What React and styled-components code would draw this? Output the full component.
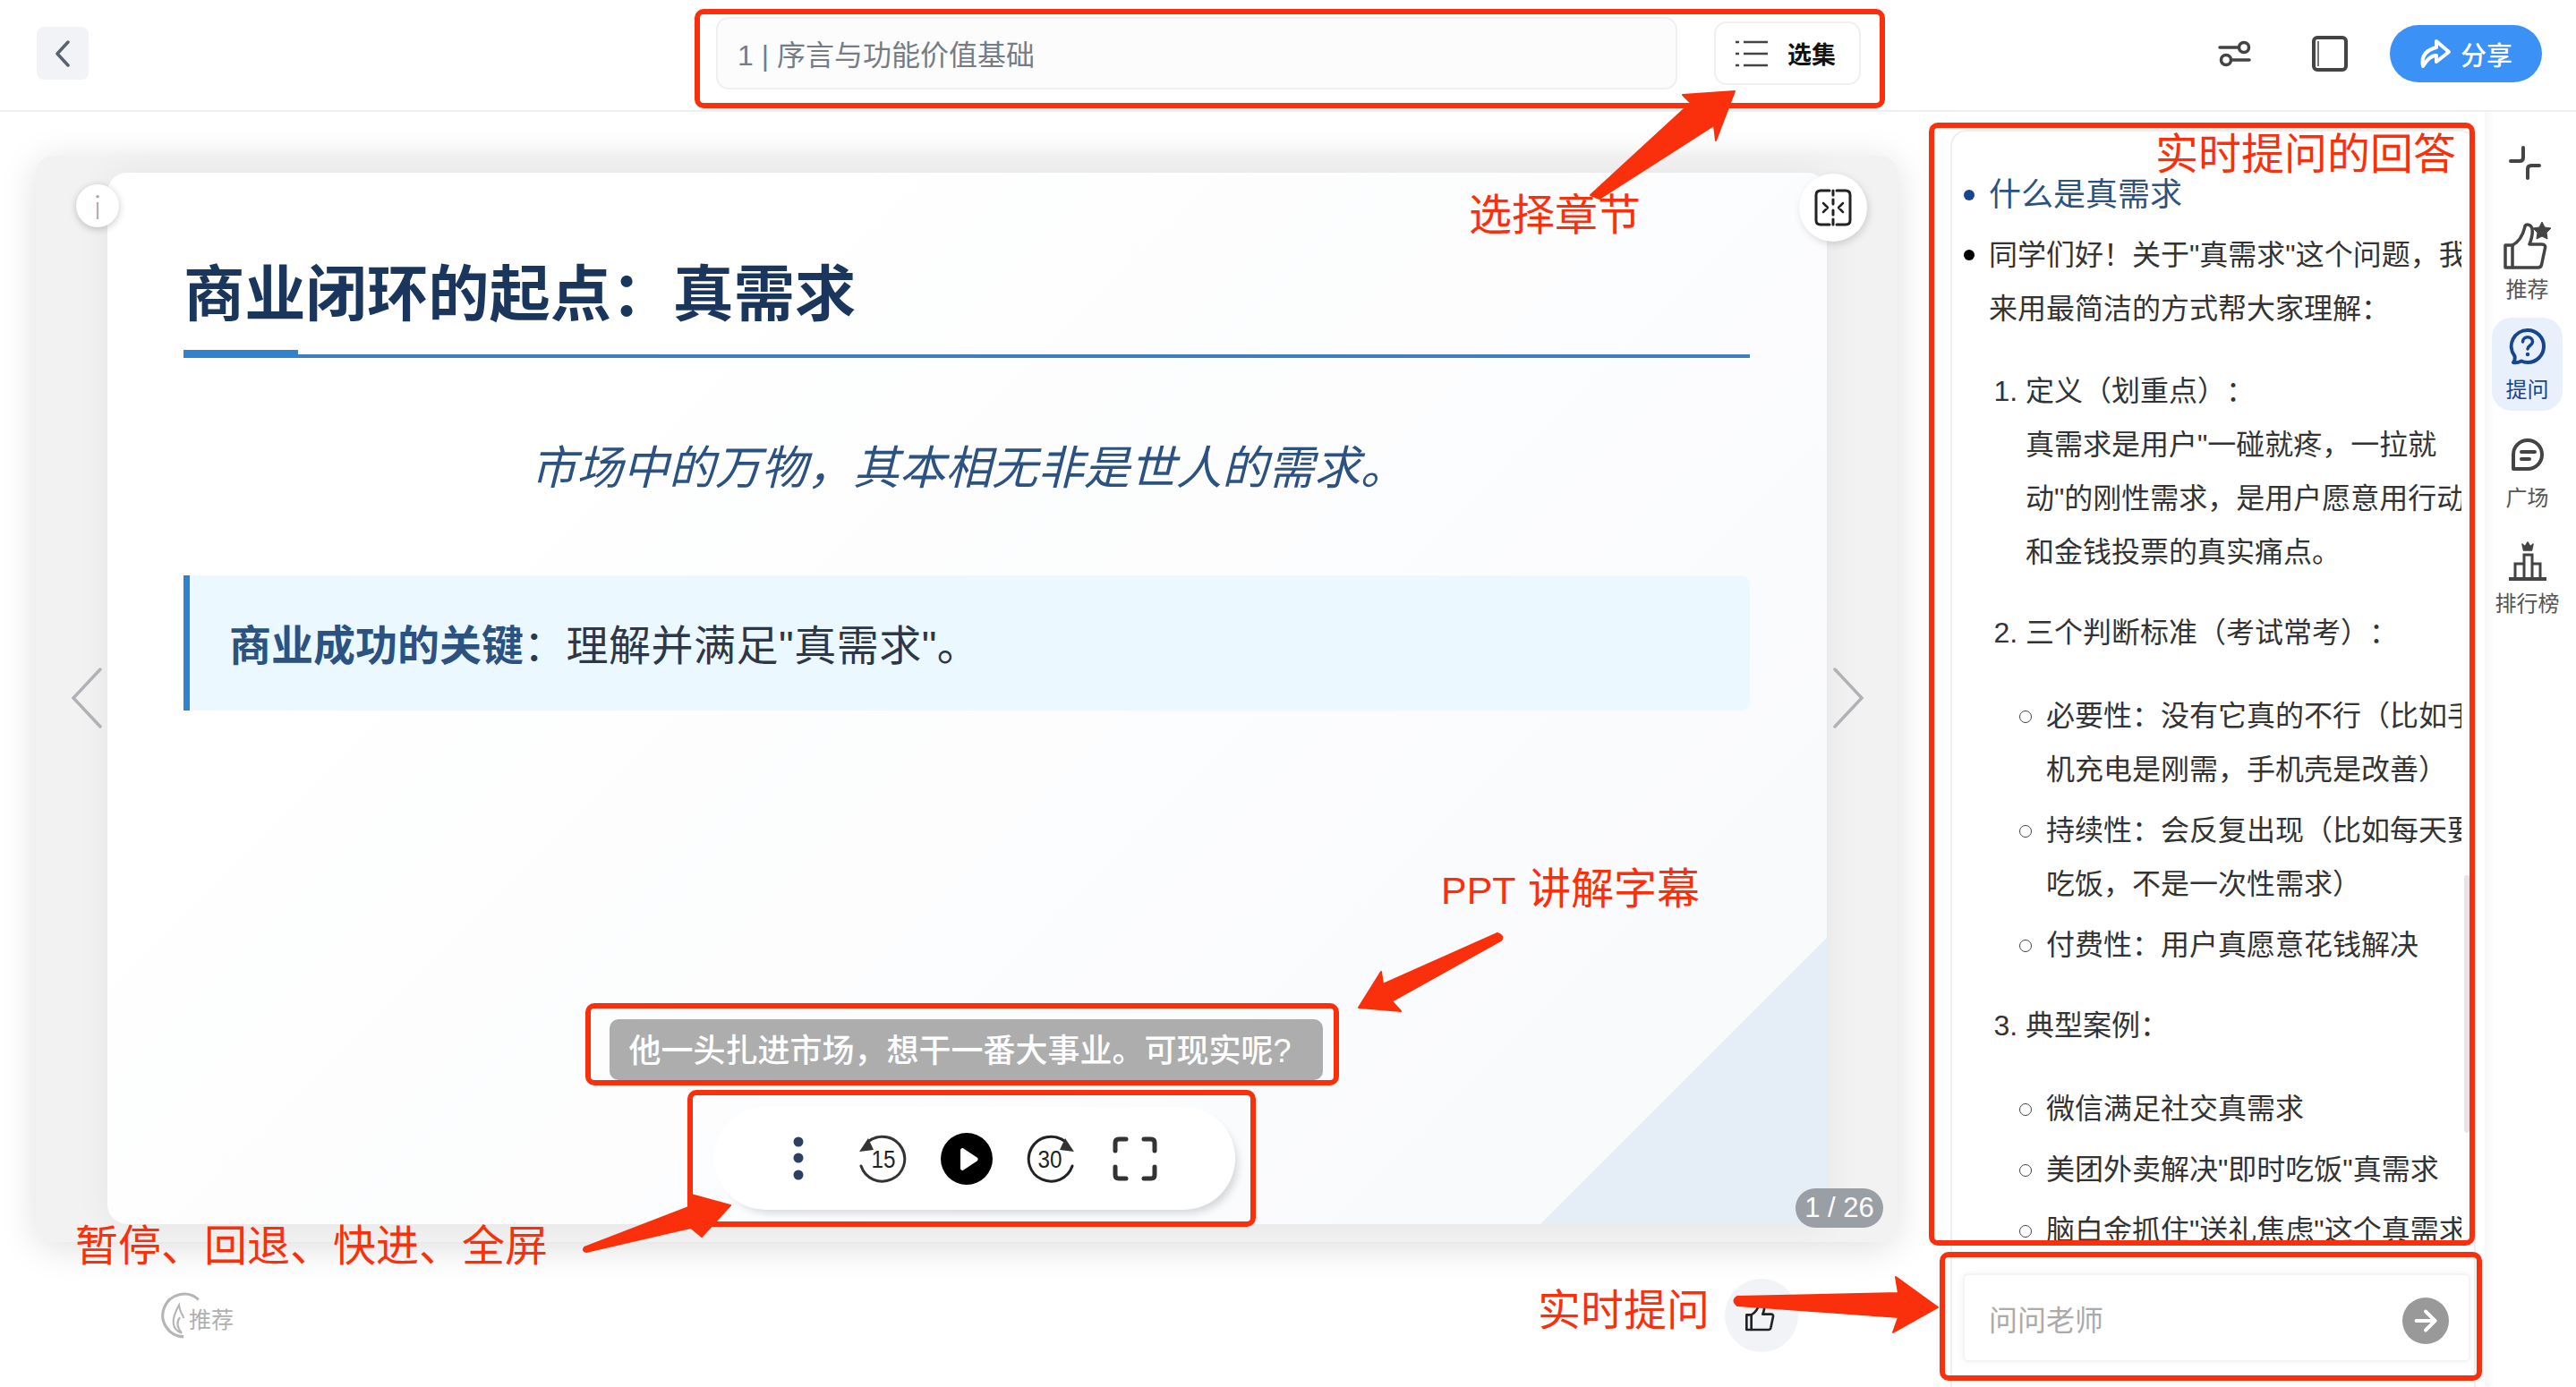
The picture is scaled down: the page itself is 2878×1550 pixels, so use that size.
import styled, { createGlobalStyle } from "styled-components";
import { ArrowRight } from "lucide-react";

const RED = "#f9300b";

const GlobalStyle = createGlobalStyle`
  html, body {
    margin: 0;
    height: 100%;
    overflow: hidden;
    background: #fff;
    font-family: "Liberation Sans", "Noto Sans CJK SC", sans-serif;
    text-spacing-trim: space-all;
  }
  * { box-sizing: border-box; }
`;

export default function App() {
  return (
    <Page>
      <GlobalStyle />
      <Header>
        <BackCell>
          <BackButton>
            <svg width="18" height="30" viewBox="0 0 18 30" fill="none" stroke="#59636f" strokeWidth="3.5" strokeLinecap="round" strokeLinejoin="round">
              <path d="M15 2 3 15l12 13" />
            </svg>
          </BackButton>
        </BackCell>
        <ChapterCell>
          <ChapterField>1 | 序言与功能价值基础</ChapterField>
          <EpisodeButton>
            <svg width="36" height="32" viewBox="0 0 36 32" fill="none" stroke="#444" strokeWidth="2.5">
              <path d="M0 3h4M9 3h27M0 16h4M9 16h27M0 29h4M9 29h27" />
            </svg>
            选集
          </EpisodeButton>
        </ChapterCell>
        <ActionsCell>
          <svg width="38" height="32" viewBox="0 0 38 32" fill="none" stroke="#444" strokeWidth="3.5" strokeLinecap="round">
            <path d="M2 9h20M15 23h20" />
            <circle cx="29" cy="9" r="5.5" />
            <circle cx="9" cy="23" r="5.5" />
          </svg>
          <PanelIcon width="42" height="42" viewBox="0 0 42 42" fill="none">
            <rect x="3" y="3" width="36" height="36" rx="4" stroke="#444" strokeWidth="4" />
            <path d="M8 7v28" stroke="#777" strokeWidth="2" />
          </PanelIcon>
          <ShareButton>
            <svg width="36" height="34" viewBox="0 0 36 34" fill="none" stroke="#fff" strokeWidth="4" strokeLinejoin="round" strokeLinecap="round">
              <path d="M19 3 33 15 19 26v-7c-6 0-10 4-15 12-2-11 3-18 15-21z" />
            </svg>
            分享
          </ShareButton>
        </ActionsCell>
      </Header>

      <Main>
        <LeftSection>
          <SlideFrame>
            <Slide>
              <SlideTitle>商业闭环的起点：真需求</SlideTitle>
              <Quote>市场中的万物，其本相无非是世人的需求。</Quote>
              <Callout>
                <strong>商业成功的关键</strong>：理解并满足"真需求"。
              </Callout>
              <CornerShape />
              <Subtitle>他一头扎进市场，想干一番大事业。可现实呢?</Subtitle>
              <Controls>
                <ControlSlot>
                  <svg width="12" height="50" viewBox="0 0 12 50" fill="#2d4060">
                    <circle cx="6" cy="6" r="5.5" />
                    <circle cx="6" cy="24" r="5.5" />
                    <circle cx="6" cy="43" r="5.5" />
                  </svg>
                </ControlSlot>
                <ControlSlot>
                  <svg width="56" height="56" viewBox="0 0 56 56" fill="none">
                    <path d="M13 8A25 25 0 1 1 4 36" stroke="#333" strokeWidth="3" strokeLinecap="round" />
                    <path d="M2 20 12 5l6 13z" fill="#333" />
                    <SkipText x="29" y="38" textLength="27" lengthAdjust="spacingAndGlyphs">15</SkipText>
                  </svg>
                </ControlSlot>
                <ControlSlot>
                  <svg width="58" height="58" viewBox="0 0 58 58">
                    <circle cx="29" cy="29" r="29" fill="#000" />
                    <path d="M22 19.5c0-2 2-3 3.500-2l15 10c1.500 1 1.500 3 0 4l-15 10c-1.500 1-3.500 0-3.500-2z" fill="#fff" />
                  </svg>
                </ControlSlot>
                <ControlSlot>
                  <svg width="56" height="56" viewBox="0 0 56 56" fill="none">
                    <path d="M43 8A25 25 0 1 0 52 36" stroke="#222" strokeWidth="3" strokeLinecap="round" />
                    <path d="M54 20 44 5l-6 13z" fill="#333" />
                    <SkipText x="27" y="38" textLength="27" lengthAdjust="spacingAndGlyphs">30</SkipText>
                  </svg>
                </ControlSlot>
                <ControlSlot>
                  <svg width="50" height="50" viewBox="0 0 50 50" fill="none" stroke="#333" strokeWidth="5" strokeLinecap="round" strokeLinejoin="round">
                    <path d="M3 16V7q0-4 4-4h8M35 3h8q4 0 4 4v9M47 34v9q0 4-4 4h-8M15 47H7q-4 0-4-4v-9" />
                  </svg>
                </ControlSlot>
              </Controls>
            </Slide>

            <InfoButton>i</InfoButton>
            <SplitButton>
              <svg width="42" height="42" viewBox="0 0 42 42" fill="none" stroke="#222" strokeWidth="3" strokeLinecap="round" strokeLinejoin="round">
                <path d="M17 2H7Q2 2 2 7v28q0 5 5 5h10M25 2h10q5 0 5 5v28q0 5-5 5H25" />
                <path d="M21 2v5M21 12v5M21 24v5M21 34v6" />
                <path d="m10 16 5 5-5 5M32 16l-5 5 5 5" strokeWidth="2.500" />
              </svg>
            </SplitButton>
            <SlideNav $side="left">
              <svg width="36" height="68" viewBox="0 0 36 68" fill="none" stroke="#b0b2b6" strokeWidth="3.500" strokeLinecap="round">
                <path d="M33 2 3 34l30 32" />
              </svg>
            </SlideNav>
            <SlideNav $side="right">
              <svg width="36" height="68" viewBox="0 0 36 68" fill="none" stroke="#b0b2b6" strokeWidth="3.500" strokeLinecap="round">
                <path d="m3 2 30 32L3 66" />
              </svg>
            </SlideNav>
            <PageBadge>1 / 26</PageBadge>
          </SlideFrame>

          <FooterRow>
            <BrandMark>
              <svg width="52" height="52" viewBox="0 0 50 50" fill="none" stroke="#b5b5b5" strokeWidth="3">
                <path d="M46 8A23 23 0 1 0 30 48" />
                <path d="M28 44C17 40 16 30 25 14c1 9 4 9 5 14M28 44c-5-6-6-12-2-17" strokeWidth="2" />
              </svg>
              <span>推荐</span>
            </BrandMark>
            <LikeButton>
              <ThumbOutline size={36} stroke="#222" />
            </LikeButton>
          </FooterRow>
        </LeftSection>

        <AnswerColumn>
          <AnswerScroll>
            <TopList>
              <TopItem $heading>什么是真需求</TopItem>
              <TopItem>
                同学们好！关于"真需求"这个问题，我
                <br />
                来用最简洁的方式帮大家理解：
              </TopItem>
            </TopList>
            <NumberList>
              <NumberItem>
                定义（划重点）：
                <br />
                真需求是用户"一碰就疼，一拉就
                <br />
                动"的刚性需求，是用户愿意用行动
                <br />
                和金钱投票的真实痛点。
              </NumberItem>
              <NumberItem>
                三个判断标准（考试常考）：
                <SubList>
                  <SubItem>
                    必要性：没有它真的不行（比如手
                    <br />
                    机充电是刚需，手机壳是改善）
                  </SubItem>
                  <SubItem>
                    持续性：会反复出现（比如每天要
                    <br />
                    吃饭，不是一次性需求）
                  </SubItem>
                  <SubItem>付费性：用户真愿意花钱解决</SubItem>
                </SubList>
              </NumberItem>
              <NumberItem>
                典型案例：
                <SubList>
                  <SubItem>微信满足社交真需求</SubItem>
                  <SubItem>美团外卖解决"即时吃饭"真需求</SubItem>
                  <SubItem>脑白金抓住"送礼焦虑"这个真需求</SubItem>
                </SubList>
              </NumberItem>
            </NumberList>
          </AnswerScroll>
          <ScrollThumb />
          <AskBox>
            <AskHint>问问老师</AskHint>
            <SendButton>
              <ArrowRight size={36} color="#fff" strokeWidth={2.6} />
            </SendButton>
          </AskBox>
        </AnswerColumn>

        <SideRail>
          <CollapseIcon width="36" height="38" viewBox="0 0 36 38" fill="none" stroke="#444" strokeWidth="4" strokeLinecap="round">
            <path d="M2 17h10q4 0 4-4V2M34 22H25q-4 0-4 4v10" />
          </CollapseIcon>
          <RailItem $top={42}>
            <IconSlot>
              <ThumbOutline size={54} stroke="#444" star />
            </IconSlot>
            推荐
          </RailItem>
          <RailItem $top={8} $active>
            <IconSlot>
              <svg width="42" height="42" viewBox="0 0 42 42" fill="none" stroke="#17468f" strokeWidth="4" strokeLinecap="round" strokeLinejoin="round">
                <path d="M21 3a18 18 0 0 1 0 36c-3 0-5-.500-7-1.500C11 39 7 39.500 5 39c2-2 2-4 1.500-7A18 18 0 0 1 21 3z" />
                <path d="M15.500 16c0-7 11-7 11 0 0 4-5.500 4-5.500 8" strokeWidth="3.500" />
                <circle cx="21" cy="30" r="1" strokeWidth="2.500" />
              </svg>
            </IconSlot>
            提问
          </RailItem>
          <RailItem $top={17}>
            <IconSlot>
              <svg width="38" height="38" viewBox="0 0 38 38" fill="none" stroke="#444" strokeWidth="4" strokeLinecap="round" strokeLinejoin="round">
                <path d="M3 35V19a16 16 0 1 1 16 16z" />
                <path d="M12 16h15M12 24h9" />
              </svg>
            </IconSlot>
            广场
          </RailItem>
          <RailItem $top={14}>
            <IconSlot>
              <svg width="44" height="46" viewBox="0 0 44 46" fill="none" stroke="#444" strokeWidth="3">
                <path d="M1 44h42" strokeWidth="4" />
                <path d="M8 44V27h10M18 44V17h9v27M27 27h9v17" />
                <path d="m16 5 3 3 3-5 3 5 3-3-1.500 7h-9z" fill="#444" strokeWidth="1.500" strokeLinejoin="round" />
              </svg>
            </IconSlot>
            排行榜
          </RailItem>
        </SideRail>
      </Main>

      <Annotations>
        <RedFrame $x={776} $y={10} $w={1330} $h={111} />
        <RedFrame $x={2155} $y={137} $w={610} $h={1255} />
        <RedFrame $x={654} $y={1121} $w={842} $h={92} />
        <RedFrame $x={768} $y={1218} $w={635} $h={153} />
        <RedFrame $x={2167} $y={1399} $w={606} $h={144} />
        <NoteLabel $x={2408} $y={143}>实时提问的回答</NoteLabel>
        <NoteLabel $x={1641} $y={211}>选择章节</NoteLabel>
        <NoteLabel $x={1610} $y={964}><NoteLatin>PPT</NoteLatin> 讲解字幕</NoteLabel>
        <NoteLabel $x={84} $y={1363}>暂停、回退、快进、全屏</NoteLabel>
        <NoteLabel $x={1718} $y={1435}>实时提问</NoteLabel>
        <ArrowLayer width="2878" height="1550" viewBox="0 0 2878 1550" fill={RED} stroke={RED} strokeWidth="2" strokeLinejoin="round">
          <path d="M1777 218 1889 115 1880 106 1938 102 1917 157 1915 140 1787 222z" />
          <path d="M1673 1043 1545 1100 1543 1086 1518 1126 1565 1130 1555 1119 1677 1051Q1681 1046 1673 1043z" />
          <path d="M653 1394 772 1348 772 1335 816 1347 784 1382 772 1372 655 1399Q650 1398 653 1394z" />
          <path d="M1941 1449 2121 1445 2118 1427 2165 1461 2115 1489 2121 1472 1941 1459Q1934 1453 1941 1449z" />
        </ArrowLayer>
      </Annotations>
    </Page>
  );
}

function ThumbOutline({ size, stroke, star }) {
  return (
    <svg width={size} height={size} viewBox="0 0 54 54" fill="none" stroke={stroke} strokeWidth={star ? 3.5 : 4} strokeLinejoin="round" style={{ overflow: "visible" }}>
      <path d="M2 26h8v25H2z" />
      <path d="M10 26c8-4 12-12 14-21 0-3 7-3 8 3 1 6-1 12-3 17h14c3 0 4 2 3.500 4l-4 19c-.500 2-2 3-4 3H10" />
      {star && (
        <path d="M43 0l3 6 7 1-5 5 1 7-6-3-6 3 1-7-5-5 7-1z" fill={stroke} strokeWidth="1" />
      )}
    </svg>
  );
}

const Page = styled.div`
  position: relative;
  width: 2878px;
  height: 1550px;
  overflow: hidden;
  background: #fff;
  color: #333;
`;

const Header = styled.header`
  display: grid;
  grid-template-columns: 800px 1279px 1fr;
  height: 125px;
  border-bottom: 2px solid #eee;
`;

const BackCell = styled.div`
  padding: 30px 0 0 41px;
`;

const BackButton = styled.button`
  display: flex;
  align-items: center;
  justify-content: center;
  width: 58px;
  height: 59px;
  border: 0;
  padding: 0;
  border-radius: 8px;
  background: #f1f3f6;
`;

const ChapterCell = styled.div`
  display: flex;
  align-items: flex-start;
  padding-top: 19px;
`;

const ChapterField = styled.div`
  display: flex;
  align-items: center;
  width: 1074px;
  height: 81px;
  padding: 0 0 2px 22px;
  border: 2px solid #f0f0f0;
  border-radius: 14px;
  background: #fcfcfc;
  color: #777c84;
  font-size: 32px;
`;

const EpisodeButton = styled.button`
  display: flex;
  align-items: center;
  gap: 22px;
  width: 164px;
  height: 71px;
  margin: 5px 0 0 41px;
  padding: 0 0 0 22px;
  border: 2px solid #f0f0f0;
  border-radius: 14px;
  background: #fff;
  color: #111;
  font-family: inherit;
  font-size: 27px;
  font-weight: 700;
`;

const ActionsCell = styled.div`
  display: flex;
  align-items: center;
  padding: 0 38px 0 399px;
  height: 120px;
`;

const PanelIcon = styled.svg`
  margin-left: 66px;
`;

const ShareButton = styled.button`
  display: flex;
  align-items: center;
  gap: 10px;
  width: 170px;
  height: 64px;
  margin-left: 46px;
  padding: 0 0 0 33px;
  border: 0;
  border-radius: 32px;
  background: #3b91f5;
  color: #fff;
  font-family: inherit;
  font-size: 29px;
  font-weight: 500;
`;

const Main = styled.main`
  display: flex;
  height: 1425px;
`;

const LeftSection = styled.section`
  width: 2179px;
  flex: none;
  padding: 49px 0 0 40px;
`;

const SlideFrame = styled.div`
  position: relative;
  width: 2080px;
  height: 1214px;
  padding: 19px 79px 20px 80px;
  border-radius: 20px;
  background: #f2f2f2;
  box-shadow: 0 6px 40px rgba(0, 0, 0, 0.13);
`;

const Slide = styled.div`
  position: relative;
  height: 100%;
  padding: 101px 86px 0 85px;
  border-radius: 22px;
  background: linear-gradient(135deg, #fff 20%, #f9fafc 90%);
  box-shadow: 0 0 40px rgba(0, 0, 0, 0.06);
`;

const SlideTitle = styled.h1`
  position: relative;
  margin: 0;
  padding-bottom: 32px;
  border-bottom: 4px solid #3f7dbd;
  color: #1a365d;
  font-size: 68.3px;
  font-weight: 700;
  line-height: 70px;

  &::after {
    content: "";
    position: absolute;
    left: 0;
    bottom: -4px;
    width: 128px;
    height: 9px;
    background: #3182ce;
  }
`;

const Quote = styled.p`
  margin: 93px 0 0;
  padding-left: 4px;
  color: #2c5282;
  font-size: 51.5px;
  font-style: italic;
  line-height: 60px;
  text-align: center;
`;

const Callout = styled.div`
  display: flex;
  align-items: center;
  height: 151px;
  margin-top: 90px;
  padding: 0 0 3px 44px;
  border-left: 7px solid #3182ce;
  border-radius: 0 10px 10px 0;
  background: #ebf8ff;
  color: #2d3748;
  font-size: 47px;
  letter-spacing: 0.5px;

  strong {
    color: #2c5282;
    font-weight: 700;
    letter-spacing: 0;
  }
`;

const CornerShape = styled.div`
  position: absolute;
  right: 0;
  bottom: 0;
  width: 320px;
  height: 320px;
  background: #e5edf6;
  clip-path: polygon(100% 0, 100% 100%, 0 100%);
`;

const Subtitle = styled.div`
  position: absolute;
  left: 561px;
  top: 946px;
  display: flex;
  align-items: center;
  justify-content: center;
  width: 797px;
  height: 68px;
  padding: 0 14px 5px 0;
  border-radius: 10px;
  background: #adadad;
  color: #fff;
  font-size: 36px;
  font-weight: 500;
`;

const Controls = styled.div`
  position: absolute;
  left: 678px;
  top: 1044px;
  display: flex;
  align-items: center;
  width: 582px;
  height: 115px;
  padding-left: 47px;
  border-radius: 58px;
  background: #fff;
  box-shadow: 6px 7px 9px -3px rgba(0, 0, 0, 0.14);
`;

const ControlSlot = styled.div`
  display: flex;
  align-items: center;
  justify-content: center;
  width: 94px;
`;

const SkipText = styled.text`
  fill: #222;
  font-family: "Liberation Sans", sans-serif;
  font-size: 27px;
  text-anchor: middle;
`;

const InfoButton = styled.div`
  position: absolute;
  left: 45px;
  top: 32px;
  display: flex;
  align-items: center;
  justify-content: center;
  width: 48px;
  height: 48px;
  border-radius: 50%;
  background: #fff;
  box-shadow: 0 2px 8px rgba(0, 0, 0, 0.22);
  color: #a5a5a5;
  font-family: Lato, sans-serif;
  font-size: 38px;
  font-weight: 300;
`;

const SplitButton = styled.div`
  position: absolute;
  right: 34px;
  top: 20px;
  display: flex;
  align-items: center;
  justify-content: center;
  width: 76px;
  height: 76px;
  border-radius: 50%;
  background: #fff;
  box-shadow: 2px 3px 8px rgba(0, 0, 0, 0.14);
`;

const SlideNav = styled.div`
  position: absolute;
  top: 572px;
  ${(props) => (props.$side === "left" ? "left: 39px;" : "right: 37px;")}
`;

const PageBadge = styled.div`
  position: absolute;
  left: 1966px;
  top: 1154px;
  display: flex;
  align-items: center;
  justify-content: center;
  width: 98px;
  height: 44px;
  border-radius: 22px;
  background: #9a9fa6;
  color: #fff;
  font-size: 31px;
`;

const FooterRow = styled.div`
  display: flex;
  align-items: center;
  justify-content: space-between;
  height: 163px;
  padding: 0 170px 0 134px;
`;

const BrandMark = styled.div`
  display: flex;
  align-items: center;
  color: #b0b0b0;
  font-size: 25px;

  span {
    margin: 6px 0 0 -15px;
  }
`;

const LikeButton = styled.div`
  display: flex;
  align-items: center;
  justify-content: center;
  width: 82px;
  height: 82px;
  border-radius: 50%;
  background: #f1f3f7;
`;

const AnswerColumn = styled.section`
  position: relative;
  width: 587px;
  height: 1405px;
  flex: none;
  margin-top: 20px;
  border: 2px solid #eee;
  border-bottom: 0;
  border-radius: 18px 18px 0 0;
`;

const AnswerScroll = styled.div`
  width: 569px;
  height: 1243px;
  padding-top: 41px;
  overflow: hidden;
  font-size: 32px;
  line-height: 60px;
  white-space: nowrap;
`;

const TopList = styled.ul`
  margin: 0;
  padding-left: 41px;
  list-style: none;
`;

const TopItem = styled.li`
  position: relative;
  color: ${(props) => (props.$heading ? "#2c5282" : "#333")};
  font-size: ${(props) => (props.$heading ? "36px" : "32px")};

  &::before {
    content: "";
    position: absolute;
    left: -28px;
    top: 24px;
    width: 12px;
    height: 12px;
    border-radius: 50%;
    background: ${(props) => (props.$heading ? "#17468f" : "#000")};
  }

  & + & {
    margin-top: 7px;
  }
`;

const NumberList = styled.ol`
  margin: 32px 0 0;
  padding-left: 82px;
`;

const NumberItem = styled.li`
  & + & {
    margin-top: 30px;
  }
`;

const SubList = styled.ul`
  margin: 33px 0 0;
  padding-left: 23px;
  list-style: none;
`;

const SubItem = styled.li`
  position: relative;

  &::before {
    content: "";
    position: absolute;
    left: -30px;
    top: 24px;
    width: 12px;
    height: 12px;
    border: 1.5px solid #444;
    border-radius: 50%;
  }

  & + & {
    margin-top: 8px;
  }
`;

const ScrollThumb = styled.div`
  position: absolute;
  right: 5px;
  top: 831px;
  width: 6px;
  height: 288px;
  border-radius: 3px;
  background: #e5e5e5;
`;

const AskBox = styled.div`
  display: flex;
  align-items: center;
  justify-content: space-between;
  width: 567px;
  height: 99px;
  margin: 33px 0 0 12px;
  padding: 0 22px 0 27px;
  border: 2px solid #f2f4f4;
  border-radius: 6px;
  background: #fff;
  box-shadow: 0 0 10px rgba(0, 0, 0, 0.05);
`;

const AskHint = styled.span`
  color: #aaa;
  font-size: 32px;
`;

const SendButton = styled.div`
  display: flex;
  align-items: center;
  justify-content: center;
  width: 52px;
  height: 52px;
  margin-top: 6px;
  border-radius: 50%;
  background: #999;
`;

const SideRail = styled.aside`
  display: flex;
  flex-direction: column;
  align-items: center;
  width: 95px;
  margin-left: 10px;
  padding-top: 38px;
  background: linear-gradient(90deg, #f8f8f8, #fff 12%);
`;

const CollapseIcon = styled.svg`
  flex: none;
  margin-right: 6px;
`;

const RailItem = styled.div`
  display: flex;
  flex-direction: column;
  align-items: center;
  gap: 12px;
  width: 79px;
  height: 104px;
  margin-top: ${(props) => props.$top}px;
  padding-top: 10px;
  border-radius: 22px;
  background: ${(props) => (props.$active ? "#e8f0fb" : "transparent")};
  color: ${(props) => (props.$active ? "#17468f" : "#555")};
  font-size: 24px;
  line-height: 30px;
  white-space: nowrap;
`;

const IconSlot = styled.div`
  display: flex;
  align-items: center;
  justify-content: center;
  height: 44px;
`;

const Annotations = styled.div`
  position: absolute;
  inset: 0;
  pointer-events: none;
`;

const RedFrame = styled.div`
  position: absolute;
  left: ${(props) => props.$x}px;
  top: ${(props) => props.$y}px;
  width: ${(props) => props.$w}px;
  height: ${(props) => props.$h}px;
  border: 6px solid ${RED};
  border-radius: 10px;
`;

const NoteLabel = styled.div`
  position: absolute;
  left: ${(props) => props.$x}px;
  top: ${(props) => props.$y}px;
  color: ${RED};
  font-size: 48px;
  line-height: 60px;
  white-space: nowrap;
`;

const NoteLatin = styled.span`
  font-size: 43px;
`;

const ArrowLayer = styled.svg`
  position: absolute;
  left: 0;
  top: 0;
`;
